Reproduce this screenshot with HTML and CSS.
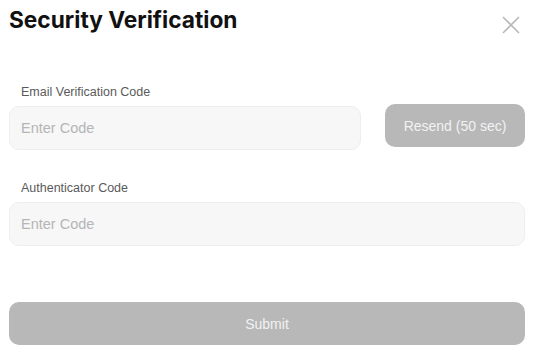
FILE: index.html
```html
<!DOCTYPE html>
<html>
<head>
<meta charset="utf-8">
<link rel="stylesheet" href="styles.css">
</head>
<body>
<div class="modal">
  <div class="header">
    <h1 class="title">Security Verification</h1>
    <button class="close" aria-label="Close">
      <svg width="18" height="18" viewBox="0 0 18 18"><path d="M1 1L17 17M17 1L1 17" stroke="#b9b9b9" stroke-width="1.6" fill="none"/></svg>
    </button>
  </div>
  <div class="field first">
    <label class="label">Email Verification Code</label>
    <div class="row">
      <div class="input"><span class="placeholder">Enter Code</span></div>
      <button class="btn resend">Resend (50 sec)</button>
    </div>
  </div>
  <div class="field second">
    <label class="label">Authenticator Code</label>
    <div class="input full"><span class="placeholder">Enter Code</span></div>
  </div>
  <button class="btn submit">Submit</button>
</div>
</body>
</html>
```

FILE: styles.css
```css
* { box-sizing: border-box; }
html, body { margin: 0; padding: 0; background: #fff; }
body { font-family: "Liberation Sans", Arial, sans-serif; }
.modal { width: 533px; padding: 0 8px 0 9px; display: flex; flex-direction: column; }
.header { display: flex; justify-content: space-between; align-items: flex-start; height: 66px; }
.title { margin: 7px 0 0 0; font-family: Inter, sans-serif; font-weight: 700; font-size: 22.7px; line-height: 26px; color: #111; }
.close { margin: 16px 5px 0 0; padding: 0; border: none; background: none; width: 18px; height: 18px; }
.close svg { display: block; }
.field { display: flex; flex-direction: column; }
.field.first { margin-top: 19px; }
.field.second { margin-top: 31px; }
.label { font-size: 12.5px; line-height: 14px; color: #5a5a5a; padding-left: 12px; margin-bottom: 7px; }
.row { display: flex; align-items: flex-start; gap: 24px; }
.input { height: 44px; width: 352px; background: #f7f7f7; border: 1px solid #eeeeee; border-radius: 10px; display: flex; align-items: center; padding-left: 11px; }
.input.full { width: 516px; }
.placeholder { font-size: 14.5px; color: #b5b5b5; }
.btn { border: none; background: #b8b8b8; color: #f2f2f2; font-family: "Liberation Sans", Arial, sans-serif; font-size: 14px; border-radius: 10px; height: 43px; }
.resend { width: 140px; margin-top: -2px; }
.submit { width: 516px; margin-top: 56px; height: 43px; }
```
